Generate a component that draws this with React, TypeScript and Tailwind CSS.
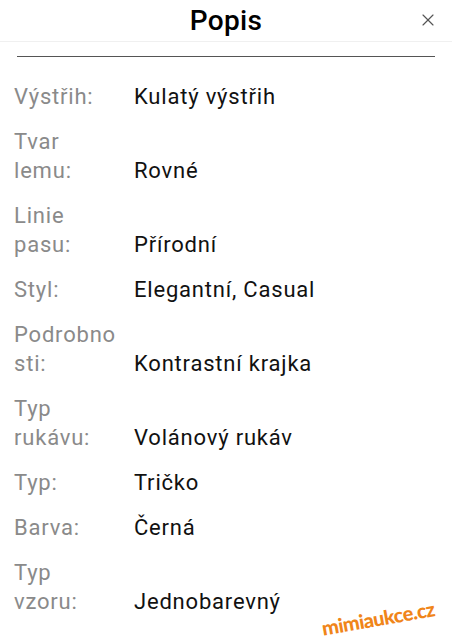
import { X } from "lucide-react";

interface Row {
    label: string;
    value: string;
}

const rows: Row[] = [
    { label: "Výstřih:", value: "Kulatý výstřih" },
    { label: "Tvar lemu:", value: "Rovné" },
    { label: "Linie pasu:", value: "Přírodní" },
    { label: "Styl:", value: "Elegantní, Casual" },
    { label: "Podrobnosti:", value: "Kontrastní krajka" },
    { label: "Typ rukávu:", value: "Volánový rukáv" },
    { label: "Typ:", value: "Tričko" },
    { label: "Barva:", value: "Černá" },
    { label: "Typ vzoru:", value: "Jednobarevný" },
];

export default function App() {
    return (
        <div className="relative w-[452px] h-[640px] overflow-hidden bg-white font-['Roboto',sans-serif]">
            <div className="relative h-[42px] flex items-center justify-center border-b border-[#f0f0f0]">
                <h2 className="text-[28px] font-medium text-black leading-none tracking-[0.3px]">Popis</h2>
                <button className="absolute right-[14px] top-[10px] text-[#555]">
                    <X size={20} strokeWidth={1.4} />
                </button>
            </div>

            <div className="mx-[17px] mt-[14px] h-px bg-[#555]" />

            <div className="flex flex-col gap-[16px] pt-[25px] pl-[14px] pr-[10px]">
                {rows.map((r) => (
                    <div key={r.label} className="flex items-end text-[22px] leading-[29px] tracking-[0.8px]">
                        <div className="w-[106px] shrink-0 text-[#8a8a8a] break-words">{r.label}</div>
                        <div className="ml-[14px] text-[#111]">{r.value}</div>
                    </div>
                ))}
            </div>

            <div className="absolute right-[17px] bottom-[7px] -rotate-[10deg] text-[#f08519] font-black text-[20px] font-['Lato',sans-serif] tracking-[-0.5px]">
                mimiaukce.cz
            </div>
        </div>
    );
}
